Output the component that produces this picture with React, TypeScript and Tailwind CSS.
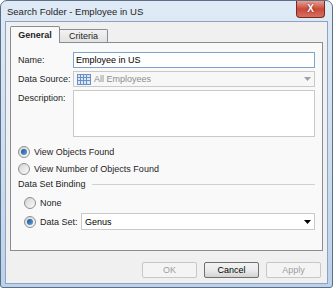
const font = { fontFamily: '"Liberation Sans", "Noto Sans", sans-serif' };

const Radio = ({ checked, label }: { checked?: boolean; label: string }) => (
  <label className="flex items-center gap-[4px] h-[13px]">
    <span className="w-[12px] h-[12px] shrink-0 rounded-full border border-[#8e8f8f] bg-gradient-to-br from-[#d4d4d4] to-[#fbfbfb] flex items-center justify-center">
      {checked && <span className="w-[6px] h-[6px] rounded-full bg-gradient-to-br from-[#1c4f8c] to-[#5fa6e6]" />}
    </span>
    <span className="whitespace-nowrap">{label}</span>
  </label>
);

const GridIcon = () => (
  <svg width="14" height="11" viewBox="0 0 14 11">
    <rect x="0.5" y="0.5" width="13" height="10" fill="#dbe6f6" stroke="#6a8fc8" />
    {[3.5, 6.5].map((y) => (
      <line key={y} x1="0" y1={y} x2="14" y2={y} stroke="#6a8fc8" />
    ))}
    {[3.5, 6.5, 9.5].map((x) => (
      <line key={x} x1={x} y1="0" x2={x} y2="11" stroke="#6a8fc8" />
    ))}
  </svg>
);

export default function App() {
  return (
    <div className="w-[334px] h-[291px] bg-white text-[9px] leading-[12px] text-[#1e1e1e]" style={font}>
      <div className="w-[333px] h-[288px] rounded-t-[7px] rounded-b-[3px] border border-[#5b6f86] bg-gradient-to-b from-[#dfeaf6] via-[#cfdff0] to-[#bcd2ea] flex flex-col px-[4px] pb-[3px]">
        <div className="h-[20px] flex items-center justify-between">
          <span className="pl-[2px] pt-[1px] text-[9.5px]">Search Folder - Employee in US</span>
          <div className="self-start w-[29px] h-[17px] mr-[3px] rounded-b-[4px] border border-t-0 border-[#7a2a20] bg-gradient-to-b from-[#e8a093] via-[#c9493a] to-[#d6705f] flex items-center justify-center">
            <span className="text-white font-bold text-[10px] leading-none [text-shadow:0_0_2px_#5a1a10]">X</span>
          </div>
        </div>
        <div className="flex-1 bg-[#f0f0f0] border border-[#8ea3bf] flex flex-col px-[4px] pt-[4px]">
          <div className="flex items-end h-[17px] relative z-10">
            <div className="h-[17px] w-[50px] border border-b-0 border-[#898c95] bg-[#f9f9f9] flex items-center justify-center font-bold rounded-t-[2px]">
              General
            </div>
            <div className="h-[13px] w-[48px] border border-b-0 border-l-0 border-[#898c95] bg-gradient-to-b from-[#f2f2f2] to-[#e2e2e2] flex items-center justify-center rounded-tr-[2px] mb-[1px]">
              Criteria
            </div>
          </div>
          <div className="h-[209px] -mt-[1px] border border-[#898c95] bg-[#f9f9f9] flex flex-col pl-[7px] pr-[7px] pt-[9px]">
            <div className="flex items-center h-[16px]">
              <span className="w-[55px] whitespace-nowrap">Name:</span>
              <div className="flex-1 h-[16px] border border-[#7da2ce] bg-white flex items-center px-[2px] text-black">Employee in US</div>
            </div>
            <div className="flex items-center h-[16px] mt-[3px]">
              <span className="w-[55px] whitespace-nowrap">Data Source:</span>
              <div className="flex-1 h-[16px] border border-[#c9c9c9] bg-[#f7f7f7] flex items-center px-[3px] gap-[3px] text-[#8d8d8d]">
                <GridIcon />
                <span className="flex-1">All Employees</span>
                <svg width="7" height="4" viewBox="0 0 7 4"><path d="M0 0h7L3.5 4z" fill="#a0a0a0" /></svg>
              </div>
            </div>
            <div className="flex items-start mt-[3px]">
              <span className="w-[55px] pt-[2px] whitespace-nowrap">Description:</span>
              <div className="flex-1 h-[47px] border border-[#c9c9c9] bg-white" />
            </div>
            <div className="flex flex-col gap-[4px] mt-[8px]">
              <Radio checked label="View Objects Found" />
              <Radio label="View Number of Objects Found" />
            </div>
            <div className="flex items-center gap-[6px] mt-[3px] h-[12px]">
              <span className="whitespace-nowrap">Data Set Binding</span>
              <div className="flex-1 h-0 border-t border-[#d0d0d0]" />
            </div>
            <div className="flex flex-col pl-[6px] mt-[6px]">
              <Radio label="None" />
              <div className="flex items-center mt-[4px]">
                <div className="w-[57px]"><Radio checked label="Data Set:" /></div>
                <div className="flex-1 h-[17px] border border-[#c9c9c9] bg-white flex items-center px-[3px] text-black">
                  <span className="flex-1">Genus</span>
                  <svg width="7" height="4" viewBox="0 0 7 4"><path d="M0 0h7L3.5 4z" fill="#000" /></svg>
                </div>
              </div>
            </div>
          </div>
          <div className="flex justify-end gap-[7px] mt-[11px] pr-[2px]">
            <div className="w-[55px] h-[16px] border border-[#c7c7c7] bg-[#f4f4f4] rounded-[2px] flex items-center justify-center text-[#9d9d9d]">OK</div>
            <div className="w-[55px] h-[16px] border border-[#707070] bg-gradient-to-b from-[#f2f2f2] via-[#ebebeb] to-[#d3d3d3] rounded-[2px] flex items-center justify-center text-black">Cancel</div>
            <div className="w-[55px] h-[16px] border border-[#c7c7c7] bg-[#f4f4f4] rounded-[2px] flex items-center justify-center text-[#9d9d9d]">Apply</div>
          </div>
        </div>
      </div>
    </div>
  );
}
